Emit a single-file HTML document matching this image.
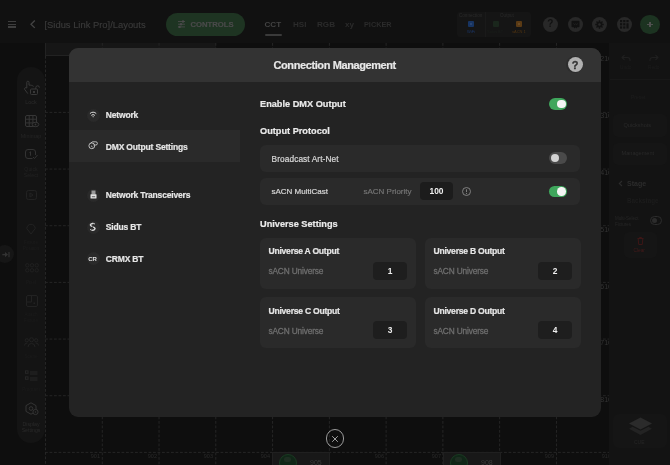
<!DOCTYPE html>
<html><head><meta charset="utf-8">
<style>
*{box-sizing:border-box;margin:0;padding:0}
html,body{width:670px;height:465px;overflow:hidden;background:#0e0e0e;font-family:"Liberation Sans",sans-serif}
#root{position:absolute;left:0;top:0;width:670px;height:465px;background:#0e0e0e;will-change:transform;overflow:hidden}
.abs{position:absolute}
svg{position:absolute;overflow:visible}
.t{position:absolute;white-space:nowrap;line-height:1}
#top{left:0;top:0;width:670px;height:43px;background:#111}
#grid{left:0;top:43px;width:610px;height:422px}
.vl{position:absolute;top:0;width:0;height:422px;border-left:1px dashed #232323}
.hl{position:absolute;left:45px;height:0;width:565px;border-top:1px dashed #232323}
.num{position:absolute;font-size:5.5px;color:#2a2a2a;text-align:right;width:20px;line-height:1}
#rp{left:609px;top:43px;width:61px;height:422px;background:#131313}
.pl{position:absolute;left:17px;width:28px;text-align:center;font-size:4.6px;color:#262626;line-height:1.3}
#modal{left:69px;top:47.6px;width:532px;height:369.5px;background:#232323;border-radius:9px;overflow:hidden}
#mh{left:0;top:0;width:532px;height:34.3px;background:#333}
.nav{position:absolute;left:0;width:171px;height:32px}
.nav .ic{position:absolute;left:17.5px;top:9.5px;width:13px;height:13px;border-radius:50%;background:#2a2a2a}
.nav .lb{position:absolute;left:36.8px;top:12.1px;font-size:8.5px;letter-spacing:-0.17px;font-weight:bold;color:#e6e6e6;line-height:1;-webkit-text-stroke:0.2px #e6e6e6}
.hd{position:absolute;left:191px;font-size:9.2px;font-weight:bold;color:#ebebeb;line-height:1;-webkit-text-stroke:0.2px #ebebeb}
.row{position:absolute;left:191px;width:320px;height:27px;background:#2a2a2a;border-radius:6px}
.tg{position:absolute;width:18px;height:11.5px;border-radius:6px}
.tg.on{background:#3fa65c}
.tg.off{background:#4a4a4a}
.tg i{position:absolute;top:1.5px;width:8.5px;height:8.5px;border-radius:50%}
.tg.on i{left:8px;background:#f4f4f4}
.tg.off i{left:1.5px;background:#d3d3d3}
.card{position:absolute;width:156px;height:51px;background:#2a2a2a;border-radius:6px}
.card .ct{position:absolute;left:8.8px;top:9.4px;font-size:8.6px;letter-spacing:-0.25px;font-weight:bold;color:#e6e6e6;line-height:1;-webkit-text-stroke:0.2px #e6e6e6}
.card .cs{position:absolute;left:8.8px;top:29.6px;font-size:8.3px;letter-spacing:-0.15px;color:#6e6e6e;line-height:1;-webkit-text-stroke:0.3px #6e6e6e}
.card .in{position:absolute;left:113.5px;top:24px;width:34px;height:18px;background:#1e1e1e;border-radius:4px;font-size:8.4px;font-weight:bold;color:#f0f0f0;text-align:center;line-height:18px}
</style></head><body>
<div id="root">

<!-- ============ top bar ============ -->
<div id="top" class="abs">
  <div class="abs" style="left:8px;top:20.8px;width:8px;height:1.3px;background:#3e3e3e"></div>
  <div class="abs" style="left:8px;top:23.6px;width:8px;height:1.3px;background:#3e3e3e"></div>
  <div class="abs" style="left:8px;top:26.4px;width:8px;height:1.3px;background:#3e3e3e"></div>
  <svg style="left:29px;top:19px" width="8" height="11"><path d="M5.8 1.5 L2 5.2 L5.8 8.9" stroke="#444" stroke-width="1.3" fill="none"/></svg>
  <div class="t" style="left:44.5px;top:19.8px;font-size:9.4px;color:#3a3a3a;-webkit-text-stroke:0.15px #3a3a3a">[Sidus Link Pro]/Layouts</div>
  <div class="abs" style="left:166.4px;top:13px;width:78.6px;height:22.5px;border-radius:12px;background:#1e3422"></div>
  <svg style="left:176.5px;top:19px" width="9" height="10"><g stroke="#4a4a4a" stroke-width="0.9"><path d="M1 2.5h7M1 5.2h7M1 7.9h7"/></g><g fill="#4a4a4a"><circle cx="6" cy="2.5" r="1.2"/><circle cx="4" cy="5.2" r="1.2"/><circle cx="2.6" cy="7.9" r="1.2"/></g></svg>
  <div class="t" style="left:190.5px;top:20.5px;font-size:7.7px;font-weight:bold;color:#4a4a4a;-webkit-text-stroke:0.2px #4a4a4a">CONTROLS</div>
  <div class="t" style="left:264.5px;top:21px;font-size:8.1px;font-weight:bold;color:#434343">CCT</div>
  <div class="abs" style="left:264.5px;top:34px;width:17px;height:2px;background:#3a3a3a;border-radius:1px"></div>
  <div class="t" style="left:293px;top:21px;font-size:8.1px;font-weight:bold;color:#2b2b2b">HSI</div>
  <div class="t" style="left:317px;top:21px;font-size:8.1px;font-weight:bold;color:#2b2b2b">RGB</div>
  <div class="t" style="left:345px;top:21px;font-size:8.1px;font-weight:bold;color:#2b2b2b">xy</div>
  <div class="t" style="left:364px;top:21px;font-size:7.3px;font-weight:bold;color:#2b2b2b">PICKER</div>
  <!-- status box -->
  <div class="abs" style="left:457px;top:12px;width:74px;height:25px;background:#151515;border-radius:3px"></div>
  <div class="abs" style="left:484.5px;top:12px;width:1px;height:25px;background:#1a1a1a"></div>
  <div class="t" style="left:459px;top:13.5px;font-size:4.6px;color:#2a2a2a">Connection</div>
  <div class="t" style="left:500px;top:13.5px;font-size:4.6px;color:#2a2a2a">Output</div>
  <div class="abs" style="left:468px;top:20.5px;width:6px;height:6px;background:#173462;border-radius:1px"></div><div class="abs" style="left:470px;top:22.5px;width:2px;height:2px;background:#2a4470"></div>
  <div class="t" style="left:467px;top:30px;font-size:4px;color:#1a3566">WiFi</div>
  <div class="abs" style="left:493px;top:20.5px;width:6px;height:6px;background:#1a261c;border-radius:1px"></div>
  <div class="t" style="left:487px;top:30px;font-size:4px;color:#1a1f1b">Sidus BT</div>
  <div class="abs" style="left:516px;top:20.5px;width:6px;height:6px;background:#5a3a14;border-radius:1px"></div><div class="abs" style="left:518px;top:22.5px;width:2px;height:2px;background:#6a4a24"></div>
  <div class="t" style="left:512px;top:30px;font-size:4px;color:#4e3210">sACN 1</div>
  <!-- circle icons -->
  <div class="abs" style="left:543.2px;top:16.6px;width:15px;height:15px;border-radius:50%;background:#282828"></div>
  <div class="t" style="left:547.3px;top:19px;font-size:10px;font-weight:bold;color:#111">?</div>
  <div class="abs" style="left:567.8px;top:16.6px;width:15px;height:15px;border-radius:50%;background:#282828"></div>
  <svg style="left:571px;top:19.5px" width="9" height="10"><path d="M1.5 0.8h6a1 1 0 0 1 1 1v4.4a1 1 0 0 1-1 1H6.2L5.3 8.6 4.5 7.2 3.7 8.6 2.8 7.2H1.5a1 1 0 0 1-1-1V1.8a1 1 0 0 1 1-1z" fill="#111"/><path d="M2.4 3.6l1.2 1.1 1-1 1 1 1.2-1.1" stroke="#282828" stroke-width="0.7" fill="none"/></svg>
  <div class="abs" style="left:592px;top:16.6px;width:15px;height:15px;border-radius:50%;background:#282828"></div>
  <svg style="left:595px;top:19.6px" width="9" height="9"><path d="M8.74 3.76 L8.74 5.24 L7.42 5.20 L7.06 6.07 L8.02 6.97 L6.97 8.02 L6.07 7.06 L5.20 7.42 L5.24 8.74 L3.76 8.74 L3.80 7.42 L2.93 7.06 L2.03 8.02 L0.98 6.97 L1.94 6.07 L1.58 5.20 L0.26 5.24 L0.26 3.76 L1.58 3.80 L1.94 2.93 L0.98 2.03 L2.03 0.98 L2.93 1.94 L3.80 1.58 L3.76 0.26 L5.24 0.26 L5.20 1.58 L6.07 1.94 L6.97 0.98 L8.02 2.03 L7.06 2.93 L7.42 3.80Z" fill="#111"/><circle cx="4.5" cy="4.5" r="1.3" fill="#282828"/></svg>
  <div class="abs" style="left:616.6px;top:16.6px;width:15px;height:15px;border-radius:50%;background:#282828"></div>
  <svg style="left:620px;top:20px" width="9" height="9"><g fill="#111"><rect x="0" y="0" width="2.2" height="2.2"/><rect x="3.2" y="0" width="2.2" height="2.2"/><rect x="6.4" y="0" width="2.2" height="2.2"/><rect x="0" y="3.2" width="2.2" height="2.2"/><rect x="3.2" y="3.2" width="2.2" height="2.2"/><rect x="0" y="6.4" width="2.2" height="2.2"/><rect x="3.2" y="6.4" width="2.2" height="2.2"/><rect x="6.4" y="3.2" width="2.2" height="5.4" rx="0.5"/></g></svg>
  <div class="abs" style="left:640.3px;top:14.7px;width:19.4px;height:19.4px;border-radius:50%;background:#1c3321"></div>
  <div class="abs" style="left:647.2px;top:23.5px;width:5.6px;height:1.8px;background:#505050"></div>
  <div class="abs" style="left:649.1px;top:21.6px;width:1.8px;height:5.6px;background:#505050"></div>
</div>

<!-- ============ grid ============ -->
<div id="grid" class="abs">
  <div class="abs" style="left:45px;top:0;width:171px;height:13px;background:#161616;border-left:1px solid #222;border-bottom:1px solid #222"></div>
  <svg style="left:0;top:-43px" width="610" height="465"><g stroke="#252525" stroke-width="1" stroke-dasharray="2.8 1.7" fill="none"><path d="M45.50 56V465"/><path d="M102.27 43V465"/><path d="M159.04 43V465"/><path d="M215.81 43V465"/><path d="M272.58 43V465"/><path d="M329.35 43V465"/><path d="M386.12 43V465"/><path d="M442.89 43V465"/><path d="M499.66 43V465"/><path d="M556.43 43V465"/><path d="M45 112.40H610"/><path d="M45 169.07H610"/><path d="M45 225.73H610"/><path d="M45 282.40H610"/><path d="M45 339.07H610"/><path d="M45 395.74H610"/><path d="M45 452.40H610"/></g></svg>
  <!-- tiles bottom -->
  <div class="abs" style="left:272px;top:409px;width:58px;height:20px;background:#181818;border:1px solid #202020"></div>
  <div class="abs" style="left:278.5px;top:410.5px;width:18px;height:18px;border-radius:50%;background:#102617;border:1px solid #1a3a22"></div><div class="abs" style="left:284px;top:414px;width:7px;height:5px;border-radius:2px;background:#1e2e22"></div>
  <div class="t" style="left:310px;top:416px;font-size:7px;color:#3a3a3a">905</div>
  <div class="abs" style="left:443px;top:409px;width:58px;height:20px;background:#181818;border:1px solid #202020"></div>
  <div class="abs" style="left:449.5px;top:410.5px;width:18px;height:18px;border-radius:50%;background:#102617;border:1px solid #1a3a22"></div><div class="abs" style="left:455px;top:414px;width:7px;height:5px;border-radius:2px;background:#1e2e22"></div>
  <div class="t" style="left:481px;top:416px;font-size:7px;color:#3a3a3a">908</div>
  <div class="num" style="left:80px;top:411px">901</div>
  <div class="num" style="left:137px;top:411px">902</div>
  <div class="num" style="left:193px;top:411px">903</div>
  <div class="num" style="left:250px;top:411px">904</div>
  <div class="num" style="left:364px;top:411px">906</div>
  <div class="num" style="left:421px;top:411px">907</div>
  <div class="num" style="left:534px;top:411px">909</div>
  <div class="num" style="left:591px;top:411px">910</div>
  <div class="num" style="left:592px;top:12px;font-size:7px;color:#333">210</div>
  <div class="num" style="left:592px;top:69px;font-size:7px;color:#333">310</div>
  <div class="num" style="left:592px;top:126px;font-size:7px;color:#333">410</div>
  <div class="num" style="left:592px;top:183px;font-size:7px;color:#333">510</div>
  <div class="num" style="left:592px;top:240px;font-size:7px;color:#333">610</div>
  <div class="num" style="left:592px;top:296px;font-size:7px;color:#333">710</div>
  <div class="num" style="left:592px;top:353px;font-size:7px;color:#333">810</div>
</div>

<!-- ============ left sidebar ============ -->
<div class="abs" style="left:17px;top:66.5px;width:28px;height:376px;border-radius:14px;background:#141414"></div>
<!-- lock -->
<svg style="left:23px;top:80px" width="17" height="16"><g fill="none" stroke="#383838" stroke-width="1" stroke-linejoin="round"><path d="M3.8 8V2.3a1.1 1.1 0 0 1 2.2 0V5.2c1.6-0.3 3.4 0.2 4.6 1.2"/><path d="M3.8 8C2.6 7.3 1 7.8 1.6 9.3L4.8 13.6"/><rect x="7.5" y="9" width="7" height="5.5" rx="1"/><path d="M12.8 9V7.6a1.8 1.8 0 0 1 3.6 0"/></g><rect x="10" y="11" width="2" height="2" fill="#383838"/></svg>
<div class="pl" style="top:99.3px;font-size:5.4px;color:#2b2b2b">Lock</div>
<!-- minimap -->
<svg style="left:25px;top:114.5px" width="14" height="13"><g fill="none" stroke="#363636" stroke-width="1"><rect x="0.5" y="0.5" width="11" height="11" rx="1.5"/><path d="M4.2 0.5v11M7.9 0.5v11M0.5 4.2h11M0.5 7.9h11"/></g><ellipse cx="10.5" cy="9.5" rx="3.3" ry="2.2" fill="#141414" stroke="#363636" stroke-width="1"/><circle cx="10.5" cy="9.5" r="0.9" fill="#363636"/></svg>
<div class="pl" style="top:132.5px;font-size:5.4px;color:#252525">Minimap</div>
<!-- quick select -->
<svg style="left:25px;top:148.5px" width="13" height="11"><g fill="none" stroke="#333" stroke-width="1"><path d="M7.5 9.5H3a2.5 2.5 0 0 1-2.5-2.5V3A2.5 2.5 0 0 1 3 0.5h5a2.5 2.5 0 0 1 2.5 2.5v3"/><path d="M8 8l1.5 1.5L12.5 6"/><path d="M4.5 3.5l1-0.8v4"/></g></svg>
<div class="pl" style="top:165.5px;font-size:5.2px;color:#222">Quick<br>Select</div>
<!-- dim icons -->
<svg style="left:25.5px;top:189.5px" width="12" height="10"><g fill="none" stroke="#222" stroke-width="1"><rect x="0.5" y="0.5" width="10" height="9" rx="2"/><path d="M4 3l3 2-3 2z"/></g></svg>
<svg style="left:25px;top:222.5px" width="12" height="12"><g fill="none" stroke="#222" stroke-width="1"><path d="M6 11L1.8 5.5a4.2 4.2 0 1 1 8.4 0z"/></g></svg>
<div class="pl" style="top:240px;font-size:4.6px;color:#1c1c1c">Fixture<br>Position</div>
<svg style="left:24.5px;top:263px" width="14" height="10"><g fill="none" stroke="#202020" stroke-width="1"><circle cx="2.3" cy="2.3" r="1.7"/><circle cx="7" cy="2.3" r="1.7"/><circle cx="11.7" cy="2.3" r="1.7"/><circle cx="2.3" cy="7.3" r="1.7"/><circle cx="7" cy="7.3" r="1.7"/><circle cx="11.7" cy="7.3" r="1.7"/></g></svg>
<div class="pl" style="top:280px;font-size:4.6px;color:#1c1c1c">Pixel</div>
<svg style="left:25.5px;top:295px" width="12" height="12"><g fill="none" stroke="#222" stroke-width="1"><rect x="0.5" y="0.5" width="11" height="11" rx="1.5"/><path d="M5.5 0.5v6.5H0.5"/></g><rect x="7.5" y="7.5" width="1.5" height="1.5" fill="#222"/></svg>
<div class="pl" style="top:312px;font-size:4.6px;color:#1b1b1b">Attach<br>Fixture</div>
<svg style="left:24px;top:337px" width="15" height="11"><g fill="none" stroke="#222" stroke-width="1"><circle cx="7.5" cy="2.8" r="2"/><circle cx="2.8" cy="3.3" r="1.6"/><circle cx="12.2" cy="3.3" r="1.6"/><path d="M4 10a3.5 3.5 0 0 1 7 0"/><path d="M0.5 8.5a2.5 2.5 0 0 1 2.8-2.4"/><path d="M14.5 8.5a2.5 2.5 0 0 0-2.8-2.4"/></g></svg>
<div class="pl" style="top:353.5px;font-size:4.6px;color:#1b1b1b">Scene</div>
<svg style="left:25px;top:369.5px" width="13" height="11"><g fill="none" stroke="#262626" stroke-width="1"><rect x="0.5" y="0.8" width="2.5" height="2.5"/><rect x="0.5" y="6.8" width="2.5" height="2.5"/><path d="M5 2h7.5M5 4h7.5M5 8h7.5M5 10h7.5"/></g></svg>
<div class="pl" style="top:387px;font-size:4.6px;color:#1b1b1b">Program</div>
<svg style="left:24.5px;top:401.5px" width="14" height="13"><g fill="none" stroke="#343434" stroke-width="1"><path d="M6 0.8l5 2.8v5.8l-5 2.8l-5-2.8V3.6z"/><circle cx="6" cy="6.5" r="1.8"/></g><circle cx="10.5" cy="10" r="2.6" fill="#141414" stroke="#343434" stroke-width="1"/><circle cx="10.5" cy="10" r="0.8" fill="#343434"/></svg>
<div class="pl" style="top:420.5px;font-size:5.2px;color:#2a2a2a">Display<br>Settings</div>
<!-- expand half circle -->
<div class="abs" style="left:-4.5px;top:245px;width:18px;height:18px;border-radius:50%;background:#161616"></div>
<svg style="left:2px;top:250.5px" width="9" height="7"><path d="M0.3 2.9h3v1.4h-3z" fill="#333"/><path d="M3 1l3 2.6-3 2.6z" fill="#333"/><path d="M7 1v5.2" stroke="#333" stroke-width="1.2"/></svg>

<!-- ============ right panel ============ -->
<div id="rp" class="abs"><div class="abs" style="left:1px;top:0;width:60px;height:422px">
  <svg style="left:11px;top:11px" width="10" height="8"><path d="M3.5 1L1 3.5 3.5 6M1 3.5h5.5a2.5 2.5 0 0 1 2.5 2.5v1" stroke="#1f1f1f" stroke-width="1.1" fill="none"/></svg>
  <div class="t" style="left:10px;top:23px;font-size:4.8px;color:#1c1c1c">Undo</div>
  <svg style="left:39px;top:11px" width="10" height="8"><path d="M6.5 1L9 3.5 6.5 6M9 3.5H3.5A2.5 2.5 0 0 0 1 6v1" stroke="#1f1f1f" stroke-width="1.1" fill="none"/></svg>
  <div class="t" style="left:38px;top:23px;font-size:4.8px;color:#1c1c1c">Redo</div>
  <div class="abs" style="left:0;top:35.5px;width:60px;height:1px;background:#181818"></div>
  <div class="t" style="left:21px;top:51.5px;font-size:5px;color:#1d1d1d">Preset</div>
  <div class="abs" style="left:3px;top:71px;width:54px;height:22.5px;border-radius:5px;background:#151515"></div>
  <div class="t" style="left:13.5px;top:79.5px;font-size:5.6px;color:#292929">Quickshots</div>
  <div class="abs" style="left:3px;top:99.5px;width:54px;height:22px;border-radius:5px;background:#151515"></div>
  <div class="t" style="left:11.5px;top:107.5px;font-size:5.6px;color:#292929">Management</div>
  <svg style="left:8px;top:137px" width="5" height="7"><path d="M4 1L1.3 3.5 4 6" stroke="#2c2c2c" stroke-width="1.1" fill="none"/></svg>
  <div class="t" style="left:17px;top:137px;font-size:7px;font-weight:bold;color:#2c2c2c">Stage</div>
  <div class="t" style="left:17px;top:155px;font-size:6.3px;font-weight:bold;color:#1c1c1c">Backstage</div>
  <div class="t" style="left:5px;top:173px;font-size:4.5px;color:#262626;line-height:1.25">Multi-Select<br>Fixtures</div>
  <div class="abs" style="left:39.5px;top:173px;width:12px;height:9px;border-radius:5px;border:1px solid #2c2c2c"></div>
  <div class="abs" style="left:41.5px;top:175px;width:5px;height:5px;border-radius:50%;background:#2c2c2c"></div>
  <div class="abs" style="left:14px;top:189px;width:33px;height:26px;border-radius:5px;background:#151515"></div>
  <svg style="left:27px;top:193.5px" width="7" height="8"><g fill="none" stroke="#3c1616" stroke-width="1"><path d="M0.5 1.5h6M2.5 1.5V0.5h2v1M1.2 1.5l0.5 6h3.6l0.5-6"/></g></svg>
  <div class="t" style="left:23.5px;top:206px;font-size:4.8px;color:#451a1a">Clear</div>
  <div class="abs" style="left:3px;top:371px;width:54px;height:34px;border-radius:6px;background:#151515"></div>
  <svg style="left:17.5px;top:373px" width="26" height="22"><path d="M12.5 1.5 L24 7.5 L12.5 13.5 L1 7.5Z" fill="#2b2b2b"/><path d="M1 12.8 L4.5 10.8 L12.5 14.8 L20.5 10.8 L24 12.8 L12.5 19Z" fill="#232323"/></svg>
  <div class="t" style="left:24px;top:397px;font-size:5px;color:#262626">CUE</div>
</div></div>

<!-- ============ modal ============ -->
<div id="modal" class="abs">
  <div id="mh" class="abs">
    <div class="t" style="left:204.5px;top:12.2px;font-size:11px;font-weight:bold;color:#e8e8e8;letter-spacing:-0.4px;-webkit-text-stroke:0.2px #e8e8e8">Connection Management</div>
    <div class="abs" style="left:497.3px;top:8.5px;width:16.6px;height:16.6px;border-radius:50%;background:#2d2d2d"></div>
    <div class="abs" style="left:498.5px;top:9.4px;width:15.4px;height:15.4px;border-radius:50%;background:#b1b1b1"></div>
    <div class="t" style="left:502.8px;top:12.6px;font-size:11px;font-weight:bold;color:#333;-webkit-text-stroke:0.3px #333">?</div>
  </div>
  <!-- nav -->
  <div class="nav" style="top:51.8px"><div class="ic"></div>
    <svg style="left:19px;top:9.8px" width="10" height="9"><g fill="none" stroke="#e0e0e0" stroke-width="1" stroke-linecap="round"><path d="M2.2 4.3a3.9 3.9 0 0 1 5.8 0"/><path d="M3.6 6.1a2.2 2.2 0 0 1 3 0"/></g><path d="M4.3 7.6a1.2 1.2 0 0 1 1.6 0L5.1 8.6z" fill="#e0e0e0"/></svg>
    <div class="lb">Network</div></div>
  <div class="nav" style="top:82.7px;background:#2a2a2a">
    <svg style="left:19px;top:10px" width="10" height="10"><g fill="none" stroke="#c8c8c8" stroke-width="0.9"><circle cx="3.8" cy="5.8" r="2.9"/><path d="M2.5 3.2 L4.5 1.8 H7.8 A1.6 1.6 0 0 1 7.8 5 H5.5"/><path d="M3 5.8 L4.6 7"/></g></svg>
    <div class="lb" style="top:12.9px">DMX Output Settings</div></div>
  <div class="nav" style="top:131.6px"><div class="ic"></div>
    <svg style="left:21px;top:11px" width="7" height="9"><path d="M1.5 0.5h4v4h-4z" fill="#bdbdbd" opacity="0.75"/><rect x="0.5" y="4.2" width="6" height="4.3" rx="0.5" fill="#e2e2e2"/><rect x="1.8" y="6.3" width="3.4" height="0.9" fill="#555"/></svg>
    <div class="lb">Network Transceivers</div></div>
  <div class="nav" style="top:163.7px"><div class="ic"></div>
    <svg style="left:20.3px;top:10.8px" width="8" height="10"><path d="M5.6 2.3A2.3 1.9 0 0 0 1.4 2.9c0 1.9 4.6 1.6 4.6 3.7A2.3 1.9 0 0 1 1.6 7.0" fill="none" stroke="#d8d8d8" stroke-width="1.5"/><path d="M4.9 1.6L2.5 8.2" stroke="#2a2a2a" stroke-width="0.9"/></svg>
    <div class="lb">Sidus BT</div></div>
  <div class="nav" style="top:195.4px"><div class="ic"></div>
    <div class="t" style="left:19.3px;top:12.6px;font-size:6px;font-weight:bold;color:#e0e0e0;letter-spacing:-0.2px">CR</div>
    <div class="lb">CRMX BT</div></div>

  <!-- content -->
  <div class="hd" style="top:52.8px">Enable DMX Output</div>
  <div class="tg on" style="left:480px;top:50.5px"><i></i></div>
  <div class="hd" style="top:79.6px">Output Protocol</div>
  <div class="row" style="top:97px">
    <div class="t" style="left:11.5px;top:10px;font-size:8.3px;letter-spacing:0.1px;color:#d8d8d8;-webkit-text-stroke:0.2px #d8d8d8">Broadcast Art-Net</div>
    <div class="tg off" style="left:289px;top:7.5px"><i></i></div>
  </div>
  <div class="row" style="top:130px">
    <div class="t" style="left:11.5px;top:10px;font-size:8px;color:#d8d8d8;-webkit-text-stroke:0.2px #d8d8d8">sACN MultiCast</div>
    <div class="t" style="left:103.5px;top:10px;font-size:8px;color:#747474;-webkit-text-stroke:0.2px #747474">sACN Priority</div>
    <div class="abs" style="left:160px;top:4.5px;width:33px;height:17.5px;background:#1c1c1c;border-radius:4px"></div>
    <div class="t" style="left:160px;top:9.5px;width:33px;text-align:center;font-size:8.4px;font-weight:bold;color:#f0f0f0">100</div>
    <svg style="left:202px;top:9px" width="9" height="9"><circle cx="4.5" cy="4.5" r="4" fill="none" stroke="#888" stroke-width="0.9"/><path d="M4.5 2.3v2.8" stroke="#888" stroke-width="0.9"/><circle cx="4.5" cy="6.6" r="0.55" fill="#888"/></svg>
    <div class="tg on" style="left:289px;top:8px"><i></i></div>
  </div>
  <div class="hd" style="top:172.7px">Universe Settings</div>
  <div class="card" style="left:190.7px;top:190px"><div class="ct">Universe A Output</div><div class="cs">sACN Universe</div><div class="in">1</div></div>
  <div class="card" style="left:355.7px;top:190px"><div class="ct">Universe B Output</div><div class="cs">sACN Universe</div><div class="in">2</div></div>
  <div class="card" style="left:190.7px;top:249.6px"><div class="ct">Universe C Output</div><div class="cs">sACN Universe</div><div class="in">3</div></div>
  <div class="card" style="left:355.7px;top:249.6px"><div class="ct">Universe D Output</div><div class="cs">sACN Universe</div><div class="in">4</div></div>
</div>

<!-- close button -->
<div class="abs" style="left:325.7px;top:429.2px;width:18.6px;height:18.6px;border-radius:50%;border:1.1px solid #9a9a9a"></div>
<svg style="left:330px;top:433.5px" width="10" height="10"><path d="M2.2 2.2L7.8 7.8M7.8 2.2L2.2 7.8" stroke="#a0a0a0" stroke-width="1"/></svg>

</div>
</body></html>
